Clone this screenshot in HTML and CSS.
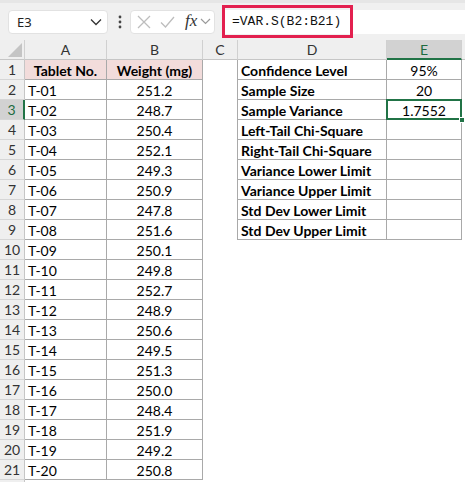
FILE: index.html
```html
<!DOCTYPE html>
<html>
<head>
<meta charset="utf-8">
<link rel="stylesheet" href="styles.css">
</head>
<body>
<div class="toolbar">
  <div class="namebox"><span class="nb-text">E3</span>
    <svg class="chev" width="12" height="8" viewBox="0 0 12 8"><path d="M1 1.5 L6 6.5 L11 1.5" fill="none" stroke="#333" stroke-width="1.3"/></svg>
  </div>
  <svg class="dots" width="4" height="14" viewBox="0 0 4 14"><circle cx="2" cy="2" r="1.4" fill="#444"/><circle cx="2" cy="7" r="1.4" fill="#444"/><circle cx="2" cy="12" r="1.4" fill="#444"/></svg>
  <div class="fxbox">
    <svg class="ic-x" width="14" height="14" viewBox="0 0 14 14"><path d="M1 1 L13 13 M13 1 L1 13" stroke="#bdbdbd" stroke-width="1.3" fill="none"/></svg>
    <svg class="ic-ok" width="15" height="12" viewBox="0 0 15 12"><path d="M1 6.5 L5.5 11 L14 1" stroke="#bdbdbd" stroke-width="1.3" fill="none"/></svg>
    <span class="fx">fx</span>
    <svg class="chev2" width="11" height="7" viewBox="0 0 11 7"><path d="M1 1 L5.5 5.5 L10 1" fill="none" stroke="#9a9a9a" stroke-width="1.2"/></svg>
  </div>
  <div class="formula"><span class="ftext">=VAR.S(B2:B21)</span><div class="hl"></div></div>
</div>
<div class="sheet">
  <div class="corner"><svg width="14" height="14" viewBox="0 0 14 14"><path d="M14 0 L14 14 L0 14 Z" fill="#c4c4c4"/></svg></div>
  <div class="ch">A</div><div class="ch">B</div><div class="ch">C</div><div class="ch">D</div><div class="ch sel">E</div><div class="ch blank"></div>

  <div class="rh">1</div><div class="c b hd">Tablet No.</div><div class="c b hd">Weight (mg)</div><div class="c cr"></div><div class="c b lbl">Confidence Level</div><div class="c b num">95%</div><div class="c"></div>
  <div class="rh">2</div><div class="c b">T-01</div><div class="c b num">251.2</div><div class="c cr"></div><div class="c b lbl">Sample Size</div><div class="c b num">20</div><div class="c"></div>
  <div class="rh rsel">3</div><div class="c b">T-02</div><div class="c b num">248.7</div><div class="c cr"></div><div class="c b lbl">Sample Variance</div><div class="c b num active">1.7552<span class="handle"></span></div><div class="c"></div>
  <div class="rh">4</div><div class="c b">T-03</div><div class="c b num">250.4</div><div class="c cr"></div><div class="c b lbl">Left-Tail Chi-Square</div><div class="c b"></div><div class="c"></div>
  <div class="rh">5</div><div class="c b">T-04</div><div class="c b num">252.1</div><div class="c cr"></div><div class="c b lbl">Right-Tail Chi-Square</div><div class="c b"></div><div class="c"></div>
  <div class="rh">6</div><div class="c b">T-05</div><div class="c b num">249.3</div><div class="c cr"></div><div class="c b lbl">Variance Lower Limit</div><div class="c b"></div><div class="c"></div>
  <div class="rh">7</div><div class="c b">T-06</div><div class="c b num">250.9</div><div class="c cr"></div><div class="c b lbl">Variance Upper Limit</div><div class="c b"></div><div class="c"></div>
  <div class="rh">8</div><div class="c b">T-07</div><div class="c b num">247.8</div><div class="c cr"></div><div class="c b lbl">Std Dev Lower Limit</div><div class="c b"></div><div class="c"></div>
  <div class="rh">9</div><div class="c b">T-08</div><div class="c b num">251.6</div><div class="c cr"></div><div class="c b lbl">Std Dev Upper Limit</div><div class="c b"></div><div class="c"></div>
  <div class="rh">10</div><div class="c b">T-09</div><div class="c b num">250.1</div><div class="c"></div><div class="c"></div><div class="c"></div><div class="c"></div>
  <div class="rh">11</div><div class="c b">T-10</div><div class="c b num">249.8</div><div class="c"></div><div class="c"></div><div class="c"></div><div class="c"></div>
  <div class="rh">12</div><div class="c b">T-11</div><div class="c b num">252.7</div><div class="c"></div><div class="c"></div><div class="c"></div><div class="c"></div>
  <div class="rh">13</div><div class="c b">T-12</div><div class="c b num">248.9</div><div class="c"></div><div class="c"></div><div class="c"></div><div class="c"></div>
  <div class="rh">14</div><div class="c b">T-13</div><div class="c b num">250.6</div><div class="c"></div><div class="c"></div><div class="c"></div><div class="c"></div>
  <div class="rh">15</div><div class="c b">T-14</div><div class="c b num">249.5</div><div class="c"></div><div class="c"></div><div class="c"></div><div class="c"></div>
  <div class="rh">16</div><div class="c b">T-15</div><div class="c b num">251.3</div><div class="c"></div><div class="c"></div><div class="c"></div><div class="c"></div>
  <div class="rh">17</div><div class="c b">T-16</div><div class="c b num">250.0</div><div class="c"></div><div class="c"></div><div class="c"></div><div class="c"></div>
  <div class="rh">18</div><div class="c b">T-17</div><div class="c b num">248.4</div><div class="c"></div><div class="c"></div><div class="c"></div><div class="c"></div>
  <div class="rh">19</div><div class="c b">T-18</div><div class="c b num">251.9</div><div class="c"></div><div class="c"></div><div class="c"></div><div class="c"></div>
  <div class="rh">20</div><div class="c b">T-19</div><div class="c b num">249.2</div><div class="c"></div><div class="c"></div><div class="c"></div><div class="c"></div>
  <div class="rh">21</div><div class="c b">T-20</div><div class="c b num">250.8</div><div class="c"></div><div class="c"></div><div class="c"></div><div class="c"></div>
  <div class="rh"></div><div class="c"></div><div class="c"></div><div class="c"></div><div class="c"></div><div class="c"></div><div class="c"></div>
</div>
</body>
</html>
```
FILE: styles.css
```css
* { box-sizing: border-box; }
body { margin: 0; background: #fff; font-family: "Lato", "Liberation Sans", sans-serif; overflow: hidden; }

.toolbar {
  height: 40px;
  background: #f0f0f0;
  border-top: 3px solid #e6e6e6;
  display: flex;
  align-items: center;
  padding-left: 8px;
}
.namebox {
  width: 100px; height: 24px;
  background: #fff;
  border: 1px solid #e2e2e2;
  border-radius: 4px;
  display: flex; align-items: center; justify-content: space-between;
  padding: 0 5px 0 8px;
  font-family: "Noto Sans", "Open Sans", sans-serif;
  font-size: 13px; color: #222;
}
.dots { margin-left: 10px; margin-right: 8px; }
.fxbox {
  width: 85px; height: 24px;
  background: #fff;
  border: 1px solid #e2e2e2;
  border-radius: 4px;
  display: flex; align-items: center;
  padding-left: 6px;
}
.ic-x { margin-right: 9px; }
.ic-ok { margin-right: 10px; }
.fx { font-family: "Liberation Serif", serif; font-style: italic; font-size: 17px; color: #333; margin-right: 3px; margin-top: -2px; }
.formula {
  flex: 1;
  margin-left: 7px;
  height: 24px;
  background: #fff;
  position: relative;
  display: flex; align-items: center;
  padding-left: 10px;
}
.ftext { font-family: "Liberation Mono", monospace; font-size: 13px; color: #111; }
.hl {
  position: absolute;
  left: 0; top: -5px;
  width: 131px; height: 33px;
  border: 3px solid #e3204f;
}

.sheet {
  display: grid;
  grid-template-columns: 25px 82px 96px 35px 149px 75px 1fr;
  grid-auto-rows: 20px;
  font-size: 14px;
  color: #000;
}
.corner, .ch, .rh {
  background: #efefef;
  color: #333;
}
.corner {
  border-right: 1px solid #d0d0d0;
  border-bottom: 1px solid #c6c6c6;
  display: flex; align-items: flex-end; justify-content: flex-end;
  padding: 0 2px 2px 0;
}
.ch {
  border-right: 1px solid #d0d0d0;
  border-bottom: 1px solid #c6c6c6;
  display: flex; align-items: center; justify-content: center;
  font-size: 14px;
}
.ch.blank { border-right: none; }
.ch.sel {
  background: #d2d2d2;
  color: #1d6b40;
  border-bottom: 2px solid #217346;
}
.rh {
  border-right: 1px solid #c6c6c6;
  border-bottom: 1px solid #d6d6d6;
  display: flex; align-items: center; justify-content: center;
  font-size: 14px;
}
.rh.rsel {
  background: #d2d2d2;
  color: #1d6b40;
  border-right: 2px solid #217346;
}
.c {
  display: flex; align-items: center;
  padding-left: 3px;
  padding-top: 1px;
  white-space: nowrap;
  overflow: visible;
}
.b {
  border-right: 1px solid #a9a9a9;
  border-bottom: 1px solid #a9a9a9;
}
.cr { border-right: 1px solid #a9a9a9; }
.hd {
  background: #f2dcdb;
  font-weight: 700;
  justify-content: center;
  padding-left: 0;
}
.lbl { font-weight: 700; }
.num { justify-content: center; padding-left: 0; }
.active { position: relative; }
.active::after {
  content: "";
  position: absolute;
  left: -1px; top: -1px; right: -1px; bottom: -1px;
  border: 2px solid #217346;
}
.handle {
  position: absolute;
  right: -4px; bottom: -4px;
  width: 6px; height: 6px;
  background: #217346;
  border: 1px solid #fff;
  z-index: 2;
}
```
